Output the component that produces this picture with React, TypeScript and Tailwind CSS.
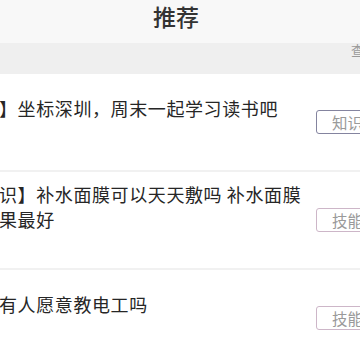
const font = { fontFamily: '"Noto Sans CJK SC", "Noto Sans", sans-serif' };

type Item = { lines: string[]; tag: string; strong?: boolean };

const items: Item[] = [
  { lines: ["】坐标深圳，周末一起学习读书吧"], tag: "知识", strong: true },
  { lines: ["识】补水面膜可以天天敷吗 补水面膜", "果最好"], tag: "技能" },
  { lines: ["有人愿意教电工吗"], tag: "技能" },
];

const Row = ({ item }: { item: Item }) => (
  <div className="flex h-[98px] items-center border-b-2 border-[#f1f1f1] bg-white">
    <div className="flex-1 -ml-[1px] pb-[27px] text-[18px] leading-[25px] tracking-[0.6px] text-[#262626] whitespace-nowrap">
      {item.lines.map((l) => (
        <div key={l}>{l}</div>
      ))}
    </div>
    <div
      className={`shrink-0 w-[60px] h-[24px] mr-[-16px] rounded-[3px] border pl-[15px] text-[15.5px] leading-[22px] text-[#9a9a9a] whitespace-nowrap ${
        item.strong ? "border-[#84849f]" : "border-[#cdb6c8]"
      }`}
    >
      {item.tag}
    </div>
  </div>
);

export default function App() {
  return (
    <div className="w-[360px] h-[360px] overflow-hidden bg-white" style={font}>
      <header className="h-[43px] bg-[#f8f8f8] flex justify-center items-start pr-[8px]">
        <span className="text-[23px] leading-[33px] text-[#333] font-medium">推荐</span>
      </header>
      <div className="h-[31px] bg-[#efefef] pl-[351px] text-[13px] leading-[14px] text-[#999] whitespace-nowrap">
        查看全部
      </div>
      {items.map((it, i) => (
        <Row key={i} item={it} />
      ))}
    </div>
  );
}
